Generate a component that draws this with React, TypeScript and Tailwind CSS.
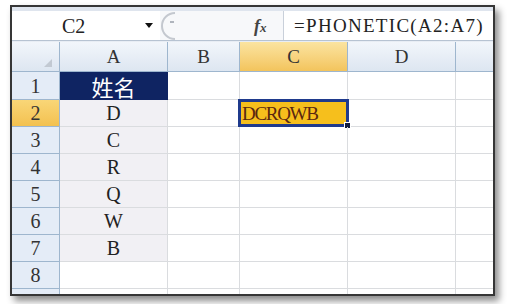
import React from "react";

// column widths: row header, A, B, C, D, E (E is clipped by the window edge)
const GRID = "grid grid-cols-[48px_108px_72px_108px_108px_108px] shrink-0";

const ROWS: { n: number; label?: string; a?: string; c?: string }[] = [
  { n: 1, label: "1", a: "姓名" },
  { n: 2, label: "2", a: "D", c: "DCRQWB" },
  { n: 3, label: "3", a: "C" },
  { n: 4, label: "4", a: "R" },
  { n: 5, label: "5", a: "Q" },
  { n: 6, label: "6", a: "W" },
  { n: 7, label: "7", a: "B" },
  { n: 8, label: "8" },
  { n: 9 },
];

const serif = "font-['Liberation_Serif',serif]";

function ColHeader({ label, active }: { label: string; active?: boolean }) {
  return (
    <div
      className={
        "flex items-center justify-center border-r border-b border-[#9eb6ce] text-[19px] leading-none text-[#333] " +
        serif +
        (active
          ? " bg-gradient-to-b from-[#fbe4a0] to-[#f3c45c]"
          : " bg-gradient-to-b from-[#f2f6fb] to-[#dde6f1]")
      }
    >
      {label}
    </div>
  );
}

export default function App() {
  return (
    <div className="w-[510px] h-[304px] bg-white overflow-hidden pt-[5px] pl-[10px]">
      <div className="w-[485px] h-[291px] border-2 border-[#363636] shadow-[4px_5px_7px_rgba(0,0,0,0.45)] bg-white flex flex-col overflow-hidden">
        {/* Formula bar */}
        <div className="h-[34px] shrink-0 flex flex-col bg-[#f7f8fa] border-b border-[#b7c3d2]">
          <div className="h-[4px] bg-[#dfe5ee]" />
          <div className="flex-1 flex items-stretch">
            <div className="w-[148px] flex items-center bg-white pl-[50px] pr-[7px]">
              <span className={"text-[20px] leading-none text-[#222] " + serif}>C2</span>
              <svg className="ml-auto" width="8" height="5" viewBox="0 0 8 5">
                <path d="M0 0 L8 0 L4 5 Z" fill="#111" />
              </svg>
            </div>
            <div className="w-[22px] flex items-center">
              <svg width="20" height="28" viewBox="0 0 20 28">
                <path d="M15 1 A13 13 0 0 0 15 27" stroke="#c4c8cf" strokeWidth="2" fill="none" />
                <path d="M10 10 L14 10" stroke="#b0b5bd" strokeWidth="2" />
              </svg>
            </div>
            <div className="w-[71px]" />
            <div className="w-[30px] flex items-center pl-[1px]">
              <span className="font-['Liberation_Serif',serif] italic font-bold text-[18px] leading-none text-[#444]">
                f
              </span>
              <span className="font-['Liberation_Serif',serif] italic font-bold text-[13px] leading-none text-[#444] mt-[3px]">
                x
              </span>
            </div>
            <div className="flex-1 flex items-center bg-white border-l border-[#c9d0da] pl-[10px]">
              <span className={"text-[19px] leading-none tracking-[1.3px] text-[#222] whitespace-nowrap " + serif}>
                =PHONETIC(A2:A7)
              </span>
            </div>
          </div>
        </div>

        <div className="h-[1px] shrink-0 bg-[#e8edf4]" />

        {/* Column headers */}
        <div className={GRID + " h-[30px]"}>
          <div className="relative border-r border-b border-[#9eb6ce] bg-gradient-to-b from-[#f2f6fb] to-[#dde6f1]">
            <svg className="absolute right-[7px] bottom-[4px]" width="8" height="8" viewBox="0 0 8 8">
              <path d="M8 0 L8 8 L0 8 Z" fill="#c2c9d2" />
            </svg>
          </div>
          <ColHeader label="A" />
          <ColHeader label="B" />
          <ColHeader label="C" active />
          <ColHeader label="D" />
          <ColHeader label="" />
        </div>

        {/* Rows */}
        {ROWS.map((r) => (
          <div key={r.n} className={GRID + (r.n === 1 ? " h-[28px]" : " h-[27px]")}>
            <div
              className={
                "flex items-center justify-center border-r border-b border-[#9eb6ce] text-[20px] leading-none text-[#333] " +
                serif +
                (r.n === 2 ? " bg-gradient-to-b from-[#f9d677] to-[#f3c14f]" : " bg-[#e4ecf7]")
              }
            >
              {r.label}
            </div>
            <div
              className={
                "flex items-center justify-center border-r border-b " +
                (r.n === 1
                  ? "bg-[#0f2462] border-[#0f2462] text-white text-[22px] font-['Noto_Sans_CJK_SC',sans-serif]"
                  : (r.a ? "bg-[#f1f0f4] " : "bg-white ") + "border-[#dadcdf] text-[20px] text-[#222] " + serif)
              }
            >
              <span className="leading-none">{r.a}</span>
            </div>
            <div className="border-r border-b border-[#dadcdf]" />
            <div className="relative border-r border-b border-[#dadcdf]">
              {r.c && (
                <>
                  <div className="absolute inset-0 bg-[#f6bf1c] flex items-center pl-[2px]">
                    <span className={"text-[19px] leading-none tracking-[-1.3px] text-[#5a2810] " + serif}>{r.c}</span>
                  </div>
                  <div className="absolute -left-[2px] -top-[1px] -right-[2px] -bottom-[1px] border-[3px] border-[#1f3a8c]" />
                  <div className="absolute -right-[4px] -bottom-[3px] w-[7px] h-[7px] bg-[#101c3e] border border-white" />
                </>
              )}
            </div>
            <div className="border-r border-b border-[#dadcdf]" />
            <div className="border-r border-b border-[#dadcdf]" />
          </div>
        ))}
      </div>
    </div>
  );
}
